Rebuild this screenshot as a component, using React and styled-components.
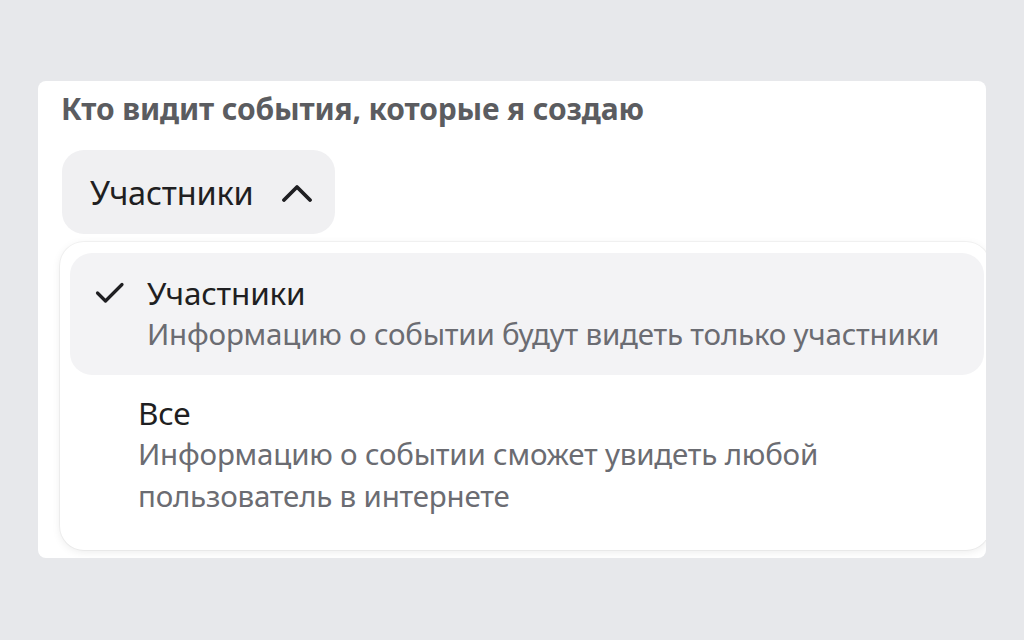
import React from 'react'
import styled, { createGlobalStyle } from 'styled-components'

const GlobalStyle = createGlobalStyle`
  html, body {
    margin: 0;
    padding: 0;
    background: #e7e8eb;
    font-family: "Noto Sans", "Open Sans", Arial, sans-serif;
  }
`

const Page = styled.div`
  width: 1024px;
  height: 640px;
  padding: 81px 38px 0 38px;
  box-sizing: border-box;
`

const Card = styled.div`
  position: relative;
  background: #fff;
  border-radius: 8px;
  height: 477px;
  overflow: hidden;
  padding: 8px 0 0 23px;
  box-sizing: border-box;
`

const Title = styled.div`
  font-size: 30px;
  font-weight: 700;
  color: #5b5c60;
  line-height: 40px;
  letter-spacing: -0.15px;
`

const Select = styled.button`
  margin: 21px 0 0 1px;
  height: 84px;
  padding: 0 22px 0 28px;
  display: inline-flex;
  align-items: center;
  gap: 27px;
  border: none;
  border-radius: 22px;
  background: #f0f0f2;
  font-family: inherit;
  font-size: 32.5px;
  color: #1f1f22;
  letter-spacing: -0.2px;
`

const Popup = styled.div`
  margin: 8px -4px 0 -1px;
  padding: 11px 6px 17px 10px;
  border-radius: 24px;
  background: #fff;
  box-shadow: 0 0 0 1px rgba(0, 0, 0, 0.04), 0 2px 8px rgba(0, 0, 0, 0.08);
`

const Option = styled.div`
  display: flex;
  align-items: flex-start;
  border-radius: 22px;
  background: ${p => (p.selected ? '#f3f3f5' : 'transparent')};
  padding: ${p => (p.selected ? '20px 20px 20px 25px' : '18px 20px 16px 68px')};
`

const Check = styled.div`
  width: 52px;
  height: 40px;
  display: flex;
  align-items: center;
  flex-shrink: 0;
`

const OptionText = styled.div`
  display: flex;
  flex-direction: column;
`

const OptionTitle = styled.div`
  font-size: 31.5px;
  line-height: 40px;
  color: #1f1f22;
  letter-spacing: -0.2px;
`

const OptionDesc = styled.div`
  font-size: 29.5px;
  line-height: 42px;
  color: #6b6c72;
  letter-spacing: -0.2px;
  max-width: 810px;
`

const Chevron = () => (
  <svg width="32" height="20" viewBox="0 0 32 20" fill="none">
    <path d="M3 18 L16 5 L29 18" stroke="#1f1f22" strokeWidth="3.8" strokeLinecap="round" strokeLinejoin="round" />
  </svg>
)

const CheckIcon = () => (
  <svg width="30" height="24" viewBox="0 0 30 24" fill="none">
    <path d="M2.5 12 L10.5 20 L27 3.5" stroke="#1f1f22" strokeWidth="3.2" strokeLinecap="round" strokeLinejoin="round" />
  </svg>
)

export default function App() {
  return (
    <>
      <GlobalStyle />
      <Page>
        <Card>
          <Title>Кто видит события, которые я создаю</Title>
          <Select>
            Участники
            <Chevron />
          </Select>
          <Popup>
            <Option selected>
              <Check><CheckIcon /></Check>
              <OptionText>
                <OptionTitle>Участники</OptionTitle>
                <OptionDesc>Информацию о событии будут видеть только участники</OptionDesc>
              </OptionText>
            </Option>
            <Option>
              <OptionText>
                <OptionTitle>Все</OptionTitle>
                <OptionDesc>Информацию о событии сможет увидеть любой пользователь в интернете</OptionDesc>
              </OptionText>
            </Option>
          </Popup>
        </Card>
      </Page>
    </>
  )
}
